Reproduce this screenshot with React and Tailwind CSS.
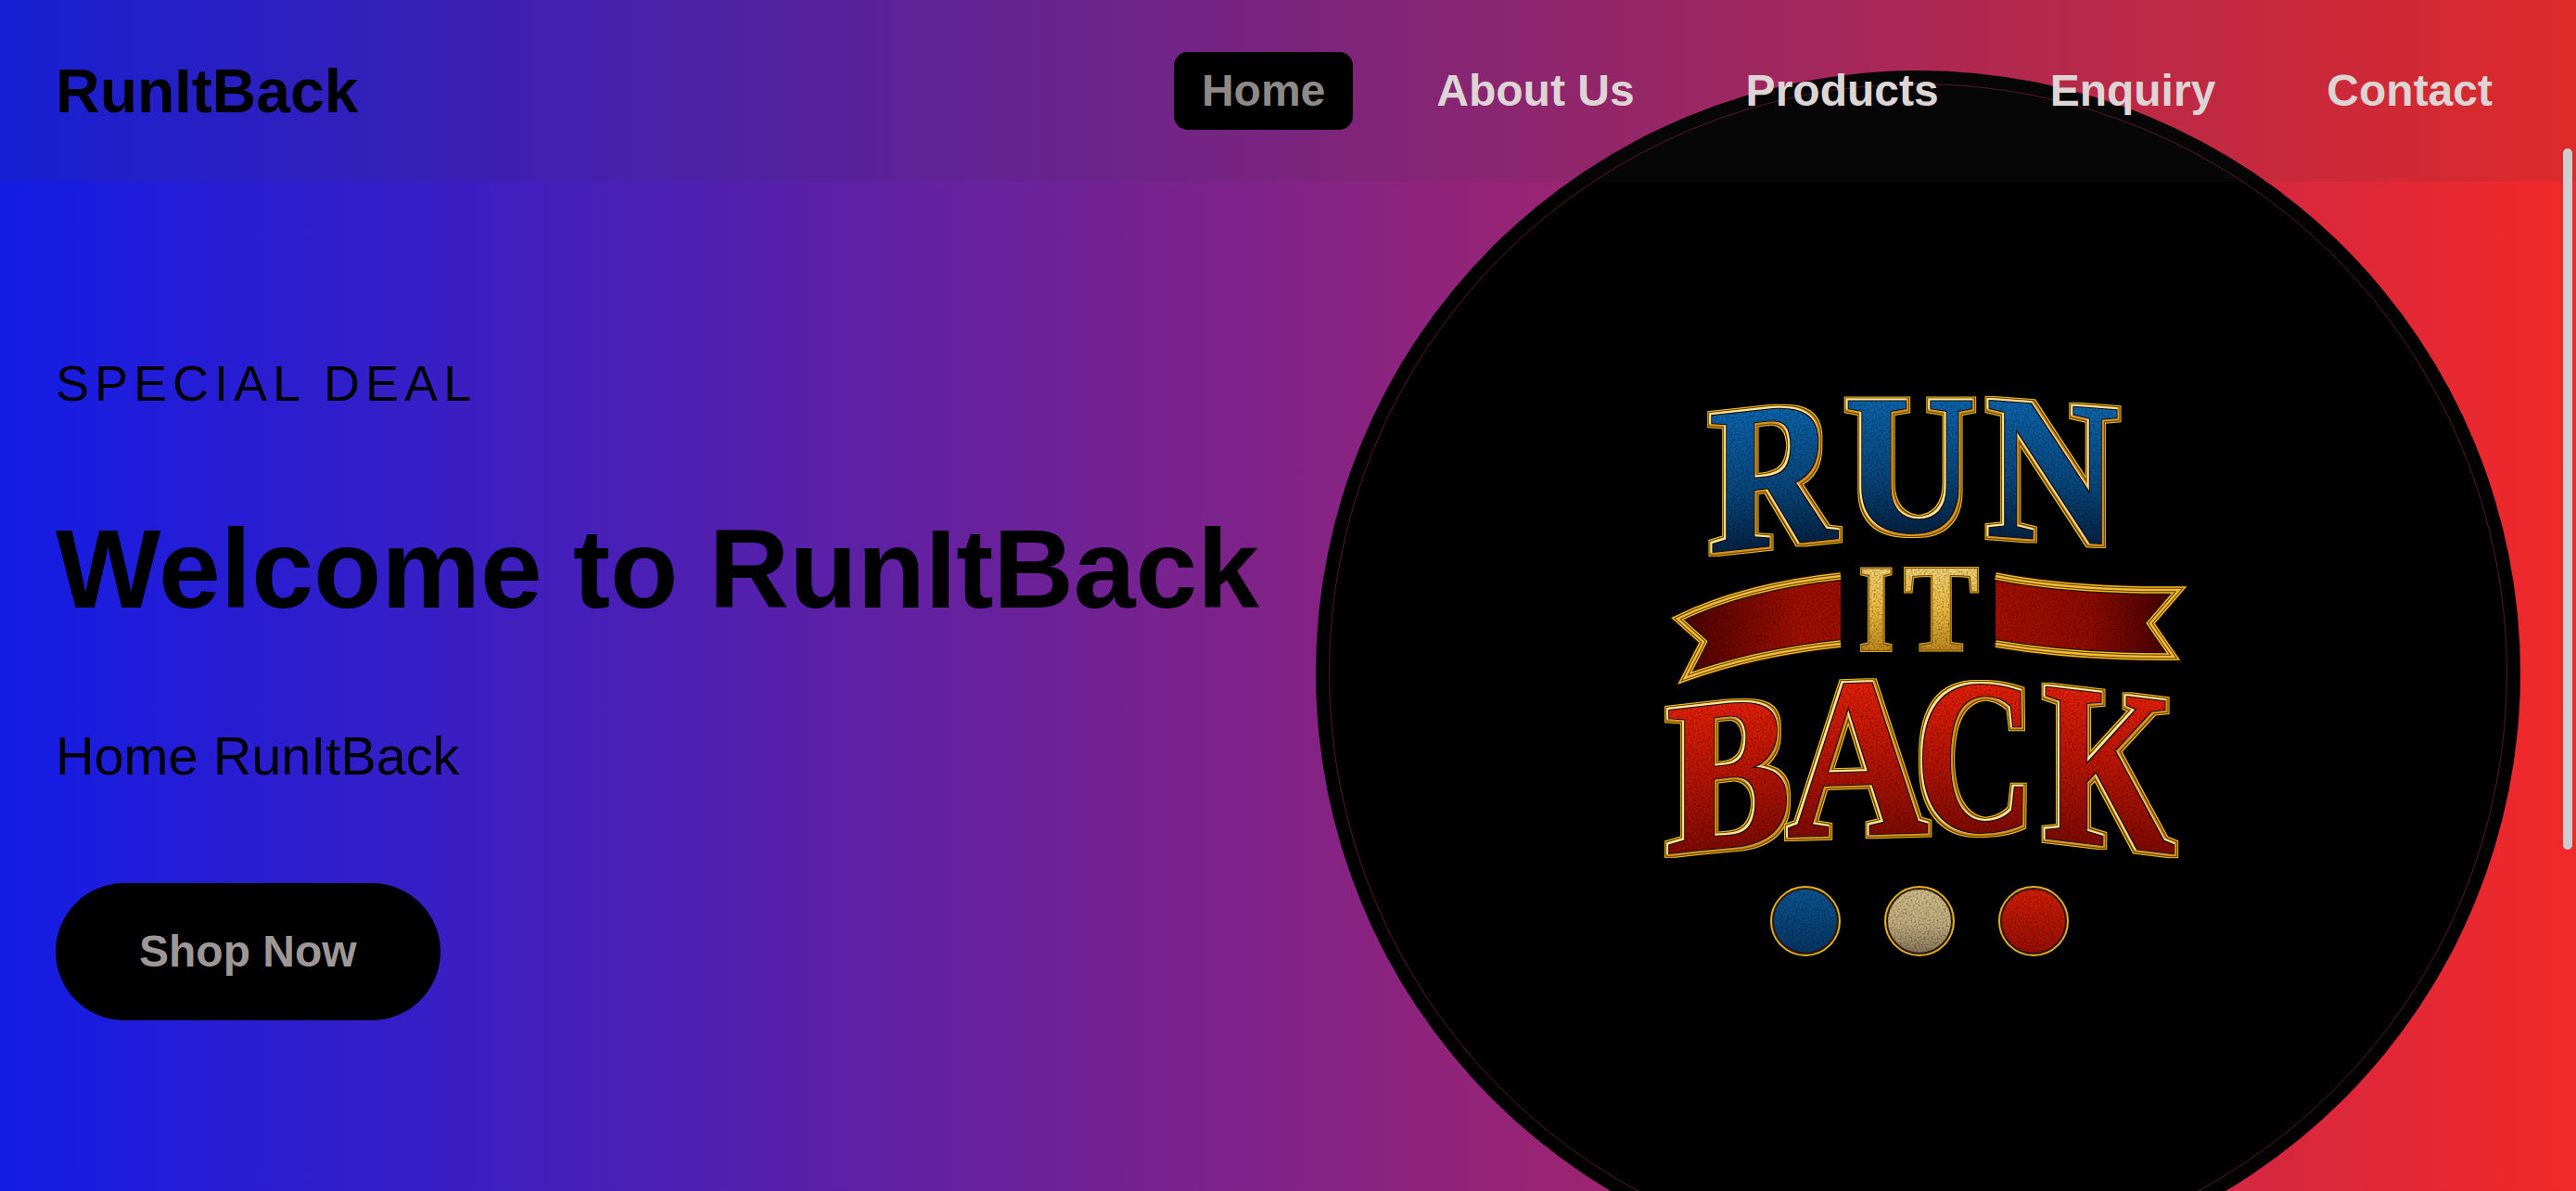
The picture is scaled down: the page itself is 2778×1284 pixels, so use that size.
const NAV = ["Home", "About Us", "Products", "Enquiry", "Contact"];

// Ink bounds of each serif capital, in em: left, right, bottom, top.
const INK = {
  R: [0.026, 0.715, 0, 0.655],
  U: [0.016, 0.701, -0.015, 0.655],
  N: [0.016, 0.701, 0, 0.655],
  I: [0.02, 0.37, 0, 0.655],
  T: [0.031, 0.636, 0, 0.655],
  B: [0.016, 0.619, 0, 0.655],
  A: [0.009, 0.689, 0, 0.66],
  C: [0.049, 0.687, -0.015, 0.67],
  K: [0.03, 0.769, 0, 0.655],
};

function Letter({ ch, x, y, slope = 0, size, fill, rim = "url(#rim)" }) {
  const [l, r, b, t] = INK[ch];
  const sx = (x[1] - x[0]) / ((r - l) * size);
  const sy = (y[1] - y[0]) / ((t - b) * size);
  const e = x[0] - sx * l * size;
  const f = y[1] + sy * b * size - slope * sx * l * size;
  return (
    <g filter={rim}>
      <text
        transform={`matrix(${sx} ${slope * sx} 0 ${sy} ${e} ${f})`}
        fontFamily="Liberation Serif, serif"
        fontWeight="700"
        fontSize={size}
        fill={fill}
      >
        {ch}
      </text>
    </g>
  );
}

function Ribbon({ d, edges, fill }) {
  return (
    <g strokeLinejoin="miter" fill="none">
      <path d={d} fill={fill} filter="url(#grain)" />
      <path d={edges} stroke="#2a0800" strokeWidth="10" />
      <path d={edges} stroke="#e8c41c" strokeWidth="7.5" />
      <path d={edges} stroke="#6b3200" strokeWidth="4.5" />
      <path d={edges} stroke="#eebc3e" strokeWidth="2.5" />
    </g>
  );
}

// One ring of the metallic rim: the glyph grown by a radius and flooded.
function rimLayer(name, radius, color, dx = 0) {
  return [
    <feMorphology key={name + "m"} in="SourceAlpha" operator="dilate" radius={radius} result={name + "m"} />,
    <feGaussianBlur key={name + "b"} in={name + "m"} stdDeviation="0.5" result={name + "b"} />,
    <feOffset key={name + "o"} in={name + "b"} dx={dx} dy={dx} result={name + "o"} />,
    <feFlood key={name + "f"} floodColor={color} result={name + "f"} />,
    <feComposite key={name} in={name + "f"} in2={name + "o"} operator="in" result={name} />,
  ];
}

const NOISE = [
  <feTurbulence key="t" type="fractalNoise" baseFrequency="0.5" numOctaves="2" seed="4" />,
  <feColorMatrix key="c" values="0 0 0 0 0  0 0 0 0 0  0 0 0 0 0  0.8 0 0 0 -0.32" />,
  <feComposite key="n" in2="SourceAlpha" operator="in" result="noise" />,
];

function Emblem() {
  return (
    <svg className="h-[730px] w-[660px] shrink-0" viewBox="1738 320 660 730">
      <defs>
        <linearGradient id="blueFill" x1="0" y1="0" x2="0" y2="1">
          <stop offset="0.2" stopColor="#0b66b0" />
          <stop offset="0.55" stopColor="#09487f" />
          <stop offset="0.8" stopColor="#042548" />
        </linearGradient>
        <linearGradient id="redFill" x1="0" y1="0" x2="0" y2="1">
          <stop offset="0.2" stopColor="#e8200a" />
          <stop offset="0.5" stopColor="#bb1505" />
          <stop offset="0.8" stopColor="#840b02" />
        </linearGradient>
        <linearGradient id="goldFill" x1="0" y1="0" x2="0" y2="1">
          <stop offset="0.1" stopColor="#f8dc84" />
          <stop offset="0.5" stopColor="#f0be42" />
          <stop offset="0.8" stopColor="#c48c20" />
        </linearGradient>
        <linearGradient id="ribbonLeft">
          <stop offset="0" stopColor="#480000" />
          <stop offset="0.75" stopColor="#a41002" />
          <stop offset="1" stopColor="#a01002" />
        </linearGradient>
        <linearGradient id="ribbonRight">
          <stop offset="0" stopColor="#a81002" />
          <stop offset="0.5" stopColor="#920c02" />
          <stop offset="1" stopColor="#400000" />
        </linearGradient>
        <linearGradient id="dotBlue" x1="0" y1="0" x2="0" y2="1">
          <stop offset="0" stopColor="#0c5796" />
          <stop offset="1" stopColor="#063562" />
        </linearGradient>
        <linearGradient id="dotCream" x1="0" y1="0" x2="0" y2="1">
          <stop offset="0" stopColor="#d2c08a" />
          <stop offset="0.55" stopColor="#c4ae7e" />
          <stop offset="1" stopColor="#86745a" />
        </linearGradient>
        <linearGradient id="dotRed" x1="0" y1="0" x2="0" y2="1">
          <stop offset="0" stopColor="#d61e04" />
          <stop offset="1" stopColor="#9a0e02" />
        </linearGradient>
        <filter id="grain" x="-5%" y="-5%" width="110%" height="110%" colorInterpolationFilters="sRGB">
          {NOISE}
          <feMerge>
            <feMergeNode in="SourceGraphic" />
            <feMergeNode in="noise" />
          </feMerge>
        </filter>
        <filter id="rim" x="-10%" y="-10%" width="120%" height="120%" colorInterpolationFilters="sRGB">
          {rimLayer("outer", 5, "#e6c418")}
          {rimLayer("groove", 3.5, "#6b3400")}
          {rimLayer("shade", 3, "#d8921c")}
          {rimLayer("shine", 2, "#fbe7a0", -0.8)}
          {rimLayer("inner", 1, "#1c0d08")}
          {NOISE}
          <feMerge>
            <feMergeNode in="outer" />
            <feMergeNode in="groove" />
            <feMergeNode in="shade" />
            <feMergeNode in="shine" />
            <feMergeNode in="inner" />
            <feMergeNode in="SourceGraphic" />
            <feMergeNode in="noise" />
          </feMerge>
        </filter>
        <filter id="goldRim" x="-15%" y="-10%" width="130%" height="120%" colorInterpolationFilters="sRGB">
          {rimLayer("outer", 2, "#dcae1e")}
          {rimLayer("groove", 1, "#7a4a08")}
          {NOISE}
          <feMerge>
            <feMergeNode in="outer" />
            <feMergeNode in="groove" />
            <feMergeNode in="SourceGraphic" />
            <feMergeNode in="noise" />
          </feMerge>
        </filter>
      </defs>

      <Letter ch="R" x={[1847, 1978]} y={[448, 595]} slope={-0.11} size={215} fill="url(#blueFill)" />
      <Letter ch="U" x={[1991, 2126]} y={[432, 576]} size={215} fill="url(#blueFill)" />
      <Letter ch="N" x={[2144, 2280]} y={[432, 577]} slope={0.075} size={215} fill="url(#blueFill)" />

      <Ribbon
        d="M1808 667Q1880 632 1984 621V694Q1890 704 1816 731L1837 692Z"
        edges="M1984 621Q1880 632 1808 667L1836 692L1816 731Q1890 704 1984 694"
        fill="url(#ribbonLeft)"
      />
      <Ribbon
        d="M2151 621Q2230 637 2349 636L2318 672L2343 708Q2240 709 2151 694Z"
        edges="M2151 621Q2230 637 2349 636L2318 672L2343 708Q2240 709 2151 694"
        fill="url(#ribbonRight)"
      />
      <Letter ch="I" x={[2006, 2039]} y={[614, 701]} size={130} fill="url(#goldFill)" rim="url(#goldRim)" />
      <Letter ch="T" x={[2056, 2129]} y={[614, 701]} size={130} fill="url(#goldFill)" rim="url(#goldRim)" />

      <Letter ch="B" x={[1799, 1921]} y={[766, 920]} slope={-0.11} size={235} fill="url(#redFill)" />
      <Letter ch="A" x={[1928, 2072]} y={[739, 902]} slope={-0.03} size={235} fill="url(#redFill)" />
      <Letter ch="C" x={[2073, 2187]} y={[737, 900]} size={235} fill="url(#redFill)" />
      <Letter ch="K" x={[2208, 2343]} y={[741, 904]} slope={0.12} size={235} fill="url(#redFill)" />

      {[
        [1946, "url(#dotBlue)"],
        [2069, "url(#dotCream)"],
        [2192, "url(#dotRed)"],
      ].map(([cx, fill]) => (
        <g key={cx}>
          <circle cx={cx} cy="993" r="36" fill={fill} filter="url(#grain)" />
          <circle cx={cx} cy="993" r="35" fill="none" stroke="#2a1204" strokeWidth="2" />
          <circle cx={cx} cy="993" r="37" fill="none" stroke="#dfb024" strokeWidth="2" />
        </g>
      ))}
    </svg>
  );
}

export default function App() {
  return (
    <div className="relative h-[1284px] w-full overflow-hidden bg-linear-to-r/srgb from-[#131ce4] to-[#f12928] font-['Liberation_Sans',Arial,sans-serif] text-black">
      <header className="absolute inset-x-0 top-0 z-10 flex h-[196px] items-center justify-between bg-[rgba(60,60,60,0.1)] px-[60px]">
        <div className="text-[66px] leading-none font-bold">RunItBack</div>
        <nav className="flex gap-[60px] text-[48px] leading-[54px] font-bold">
          {NAV.map((item, i) => (
            <a
              key={item}
              className={
                i === 0
                  ? "rounded-[15px] bg-black px-[30px] py-[15px] text-[#8d8987]"
                  : "px-[30px] py-[15px] text-[#ddd5d5]"
              }
            >
              {item}
            </a>
          ))}
        </nav>
      </header>

      <main className="flex h-full items-start justify-between px-[60px]">
        <section className="flex flex-col items-start pt-[386px] whitespace-nowrap">
          <p className="text-[54px] leading-none tracking-[6px]">SPECIAL DEAL</p>
          <h1 className="mt-[113px] text-[120px] leading-none font-bold">Welcome to RunItBack</h1>
          <p className="mt-[113px] text-[57.6px] leading-[58px]">Home RunItBack</p>
          <button className="mt-[108px] flex h-[148px] items-center rounded-[75px] bg-black px-[90px] text-[48px] leading-none font-bold text-[#9d9897]">
            Shop Now
          </button>
        </section>

        <div className="mt-[76px] flex size-[1299px] shrink-0 justify-center rounded-full bg-black p-[14px]">
          <div className="flex size-full justify-center rounded-full border border-[#a02858]/55 pt-[229px]">
            <Emblem />
          </div>
        </div>
      </main>

      <div className="absolute top-[160px] right-[4px] z-20 h-[756px] w-[10px] rounded-full bg-[#cdcdcd]" />
    </div>
  );
}
